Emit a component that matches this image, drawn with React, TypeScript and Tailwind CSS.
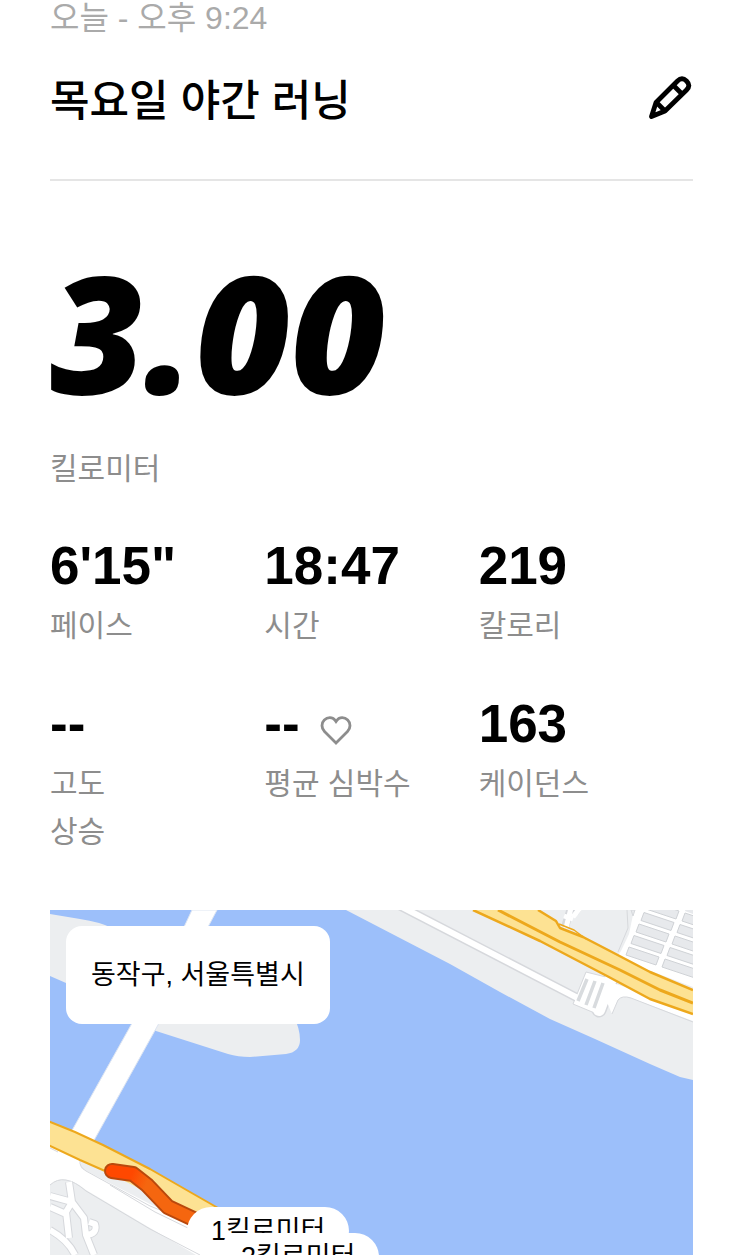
import type { ReactNode } from "react";

type Stat = {
  value: string;
  label: string;
  icon?: ReactNode;
};

function HeartIcon() {
  return (
    <svg className="mb-2 h-[30px] w-8" viewBox="0 0 32 30" fill="none" stroke="#8d8d8d" strokeWidth="2.8" aria-hidden="true">
      <path d="M16 27 L4.5 15.5 C1.2 12.2 1.2 7 4.3 4 C7.5 0.8 12.5 0.8 15 4.2 L16 5.6 L17 4.2 C19.5 0.8 24.5 0.8 27.7 4 C30.8 7 30.8 12.2 27.5 15.5 Z" />
    </svg>
  );
}

function PencilIcon() {
  return (
    <svg className="size-11" viewBox="0 0 44 44" fill="none" stroke="#000" strokeWidth="4.8" strokeLinejoin="round" aria-hidden="true">
      <path d="M2.5 41.5 L7 27.5 L28.5 6 Q33 1.5 37.5 6 Q42 10.5 37.5 15 L16 36 Z" />
      <path d="M24 10 L33.5 19.5" />
      <path d="M7.5 27.5 L16 36" />
    </svg>
  );
}

const stats: Stat[] = [
  { value: "6'15\"", label: "페이스" },
  { value: "18:47", label: "시간" },
  { value: "219", label: "칼로리" },
  { value: "--", label: "고도\n상승" },
  { value: "--", label: "평균 심박수", icon: <HeartIcon /> },
  { value: "163", label: "케이던스" },
];

const blockRows = [0, 1, 2, 3, 4];

function RouteMap() {
  return (
    <svg className="block w-full" viewBox="0 0 643 345" fill="none" strokeLinejoin="round" aria-hidden="true">
      <rect width="643" height="345" fill="#9cbffa" />

      {/* island and bridge */}
      <path d="M0 4 L30 9 Q50 12 62 18 L243 105 Q250 118 250 130 Q250 142 236 144 L200 147 Q188 147 178 144 L106 121 L16 73 L0 66 Z" fill="#eceef0" />
      <path d="M142 0 L134 17 L81 115 L20 224 L42 234 L108 115 L158 17 L167 0 Z" fill="#fff" stroke="#dde5f2" />

      {/* north bank */}
      <path d="M296 0 L400 54 L450 82 L500 109 L545 129 L600 154 L630 167 L643 170 V0 Z" fill="#eceef0" />
      <path d="M350 -4 L545 97" stroke="#d6d8dc" strokeWidth="9" />
      <path d="M562 66 L549 100" stroke="#d6d8dc" strokeWidth="15" strokeLinecap="round" />
      <path d="M536 62 L560 68 L547 104 L523 94 Z" fill="#fff" stroke="#d6d8dc" />
      <path d="M350 -4 L545 97" stroke="#fff" strokeWidth="6" />
      <path d="M562 66 L549 100" stroke="#fff" strokeWidth="12" strokeLinecap="round" />
      <path d="M537 69 L528 91 M545 71 L536 95 M553 73 L544 98" stroke="#d8dbde" strokeWidth="3.5" />
      <path d="M560 72 L643 100 L643 111 L581 88 Q572 85 568 90 L562 104 L556 90 Z" fill="#fff" />
      <path d="M643 112 L581 88 Q572 85 568 90 L562 104" stroke="#d6d8dc" />

      {/* street blocks */}
      <path d="M573 0 L584 0 L579 24 L571 41 L566 48 L593 58 L643 77 V0 Z" fill="#fff" />
      <path d="M577 0 L578 18 L568 42" stroke="#d6d8dc" />
      <path d="M581 0 L585 0 L583 6 Z" fill="#e7e9ec" stroke="#d6d8dc" />
      {blockRows.map((row) => (
        <g key={row} transform={`translate(${row * -5} ${row * 11.5})`} fill="#e7e9ec" stroke="#cfd2d6">
          <path d="M599 -9 L629 1 L626 9 L596 -1 Z" />
          <path d="M635 3 L668 14 L665 22 L632 11 Z" />
        </g>
      ))}
      <path d="M616 -9 L627 -6 L625 -1 Z M638 -8 L650 -4 L648 6 L635 1 Z" fill="#e7e9ec" />
      <path d="M521 -2 L515 17 M528 -2 L525 2" stroke="#d6d8dc" strokeWidth="8" />
      <path d="M514 6 L523 9 M521 -2 L516 18 M523 7 L530 -2" stroke="#fff" strokeWidth="5" />

      {/* expressway, north */}
      <path d="M423 0 L490 31 L557 66 L600 89 L643 104 V80 L600 62 L560 41 L533 27 L510 18 L506 11 L488 0 Z" fill="#fde293" />
      <path d="M423 0 L490 31 L557 66 L600 89 L643 104 M643 80 L600 62 L560 41 L533 27 L510 18 L506 11 L488 0" stroke="#eda81c" strokeWidth="2.5" />
      <path d="M448 0 L510 32 L570 60 L610 80 L643 93" stroke="#eda81c" strokeWidth="3" />
      <path d="M509 14 L524 20 L536 29" stroke="#eda81c" strokeWidth="1.5" />

      {/* south bank */}
      <path d="M0 224 L50 250 L172 305 L172 345 L0 345 Z" fill="#eceef0" />
      <path d="M0 232 L30 246 L31 258 L100 294 L145 315 L172 330 L172 345 L146 345 L100 318 L36 280 Q14 262 0 275 Z" fill="#fff" />
      <path d="M30 250 Q29 257 36 261 L100 296 L145 314 M36 281 L100 319 L150 345 M0 275 Q14 262 36 281 M0 238 L8 242 M60 275 L105 302 L140 319" stroke="#d6d8dc" />
      <path d="M19 272 L22 292 L34 308 L36 325 L44 345 M0 286 L22 292 L16 302 L19 328 M0 297 L16 304 M36 325 Q48 324 45 314 L39 312 M0 320 Q18 330 25 345" stroke="#d6d8dc" strokeWidth="8" />
      <path d="M19 272 L22 292 L34 308 L36 325 L44 345 M0 286 L22 292 L16 302 L19 328 M0 297 L16 304 M36 325 Q48 324 45 314 L39 312 M0 320 Q18 330 25 345" stroke="#fff" strokeWidth="6" />

      {/* expressway, south */}
      <path d="M0 212 L25 222 L53 235 L100 259 L140 282 L175 302 L140 306 L100 284 L55 261 L30 250 L0 236 Z" fill="#fde293" />
      <path d="M-2 211 L25 222 L53 235 L100 259 L140 282 L175 302 M-2 235 L30 250 L55 261" stroke="#eda81c" strokeWidth="2" />

      {/* run */}
      <defs>
        <linearGradient id="pace" gradientUnits="userSpaceOnUse" x1="60" y1="261" x2="96" y2="275">
          <stop offset="0.55" stopColor="#ff4800" />
          <stop offset="1" stopColor="#f5660f" />
        </linearGradient>
      </defs>
      <path d="M62 261 L83 264 L97 275 L118 297 L150 312" stroke="#b9480c" strokeWidth="16" strokeLinecap="round" />
      <path d="M62 261 L83 264 L97 275 L118 297 L150 312" stroke="url(#pace)" strokeWidth="12" strokeLinecap="round" />
    </svg>
  );
}

export default function App() {
  return (
    <main className="bg-white px-[50px] font-['Liberation_Sans','Noto_Sans_CJK_KR',sans-serif] text-black">
      <p className="text-[32px] leading-9 text-[#aaa]">오늘 - 오후 9:24</p>

      <header className="flex items-center justify-between border-b-2 border-[#e5e5e5] pt-[35px] pb-12">
        <h1 className="text-[43px] leading-[60px] font-medium">목요일 야간 러닝</h1>
        <button type="button" aria-label="이름 편집" className="-mt-2">
          <PencilIcon />
        </button>
      </header>

      <section className="pt-[68px]">
        <p className="font-['Noto_Sans',sans-serif] text-[164px] leading-none font-black italic">3.00</p>
        <p className="mt-8 text-[30px] leading-12 text-[#8d8d8d]">킬로미터</p>
      </section>

      <dl className="mt-[43px] grid grid-cols-3 gap-y-11">
        {stats.map((stat) => (
          <div key={stat.label} className="flex flex-col-reverse justify-end gap-1.5">
            <dt className="text-[30px] leading-12 whitespace-pre-line text-[#8d8d8d]">{stat.label}</dt>
            <dd className="flex items-end gap-5 text-[53px] leading-[60px] font-bold">
              {stat.value}
              {stat.icon}
            </dd>
          </div>
        ))}
      </dl>

      <section className="relative mt-[54px] overflow-hidden">
        <RouteMap />
        <p className="absolute top-4 left-4 rounded-2xl bg-white px-[25px] py-6 text-[27px] leading-[50px]">동작구, 서울특별시</p>
        <span className="absolute top-[297px] left-[137px] rounded-3xl bg-white px-6 text-[27px] leading-12">1킬로미터</span>
        <span className="absolute top-[323px] left-[167px] rounded-3xl bg-white px-6 text-[27px] leading-12">2킬로미터</span>
      </section>
    </main>
  );
}
